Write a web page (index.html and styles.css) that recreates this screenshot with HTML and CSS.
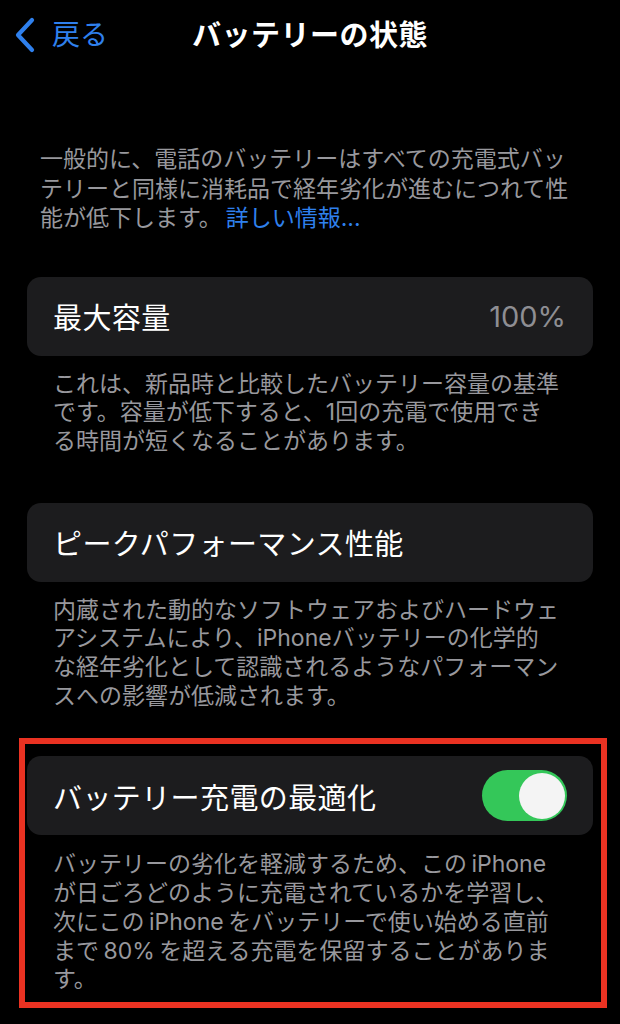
FILE: index.html
```html
<!DOCTYPE html>
<html>
<head>
	<meta charset="utf-8">
	<title>バッテリーの状態</title>
	<link rel="stylesheet" href="styles.css">
</head>
<body>
	<div class="nav">
		<a class="back" href="#">
			<svg class="chevron" width="22" height="36" viewBox="0 0 22 36">
				<path d="M18 3 L4 18 L18 33" fill="none" stroke="#2f80ed" stroke-width="4.2" stroke-linecap="round" stroke-linejoin="round"/>
			</svg>
			<span>戻る</span>
		</a>
		<div class="title">バッテリーの状態</div>
		<div></div>
	</div>

	<p class="intro">一般的に、電話のバッテリーはすべての充電式バッ<br>テリーと同様に消耗品で経年劣化が進むにつれて性<br>能が低下します。<a class="link" href="#">詳しい情報...</a></p>

	<div class="card">
		<span class="label">最大容量</span>
		<span class="value">100%</span>
	</div>
	<p class="note">これは、新品時と比較したバッテリー容量の基準<br>です。容量が低下すると、1回の充電で使用でき<br>る時間が短くなることがあります。</p>

	<div class="card card-2">
		<span class="label">ピークパフォーマンス性能</span>
	</div>
	<p class="note">内蔵された動的なソフトウェアおよびハードウェ<br>アシステムにより、iPhoneバッテリーの化学的<br>な経年劣化として認識されるようなパフォーマン<br>スへの影響が低減されます。</p>

	<div class="marked">
		<div class="card card-3">
			<span class="label">バッテリー充電の最適化</span>
			<span class="toggle"><span class="knob"></span></span>
		</div>
		<p class="note note-3">バッテリーの劣化を軽減するため、この iPhone<br>が日ごろどのように充電されているかを学習し、<br>次にこの iPhone をバッテリーで使い始める直前<br>まで 80% を超える充電を保留することがありま<br>す。</p>
		<div class="frame"></div>
	</div>
</body>
</html>
```

FILE: styles.css
```css
body {
	margin: 0;
	padding: 0;
	background-color: #000;
	color: #fff;
	font-family: Inter, "Noto Sans CJK JP", sans-serif;
	width: 620px;
	height: 1024px;
	overflow: hidden;
}

.nav {
	display: grid;
	grid-template-columns: 1fr auto 1fr;
	align-items: center;
	height: 66px;
	padding-bottom: 6px;
}

.back {
	display: flex;
	align-items: center;
	gap: 16px;
	padding-left: 14px;
	color: #2f80ed;
	text-decoration: none;
	font-size: 28px;
}

.chevron {
	display: block;
	margin-top: 3px;
}

.title {
	font-size: 29px;
	font-weight: 700;
	letter-spacing: 0.5px;
}

.intro {
	margin: 73px 0 0;
	padding: 0 20px 0 40px;
	font-size: 23px;
	line-height: 29.5px;
	color: #98989d;
}

.link {
	color: #2f80ed;
	text-decoration: none;
	margin-left: 4px;
}

.card {
	display: flex;
	align-items: center;
	justify-content: space-between;
	height: 79px;
	margin: 43px 27px 0;
	padding: 0 27px 0 26px;
	background-color: #1c1c1e;
	border-radius: 14px;
}

.label {
	font-size: 29px;
	letter-spacing: 0.4px;
}

.value {
	font-size: 29px;
	color: #8e8e93;
}

.note {
	margin: 14px 0 0;
	padding: 0 10px 0 53px;
	font-size: 23px;
	line-height: 28.7px;
	color: #98989d;
}

.card-2 {
	margin-top: 47px;
}

.marked {
	position: relative;
	margin-top: 46px;
}

.card-3 {
	margin: 0 27px;
	padding-right: 26px;
}

.toggle {
	display: flex;
	justify-content: flex-end;
	align-items: center;
	width: 85px;
	height: 51px;
	padding: 0 2px;
	box-sizing: border-box;
	background-color: #34c759;
	border-radius: 26px;
}

.knob {
	width: 46px;
	height: 46px;
	border-radius: 50%;
	background-color: #f4f4f4;
}

.note-3 {
	margin-top: 15px;
	word-spacing: -2px;
}

.frame {
	position: absolute;
	top: -18px;
	left: 19px;
	right: 13px;
	bottom: -14px;
	border: 6px solid #ea3222;
	pointer-events: none;
}
```
